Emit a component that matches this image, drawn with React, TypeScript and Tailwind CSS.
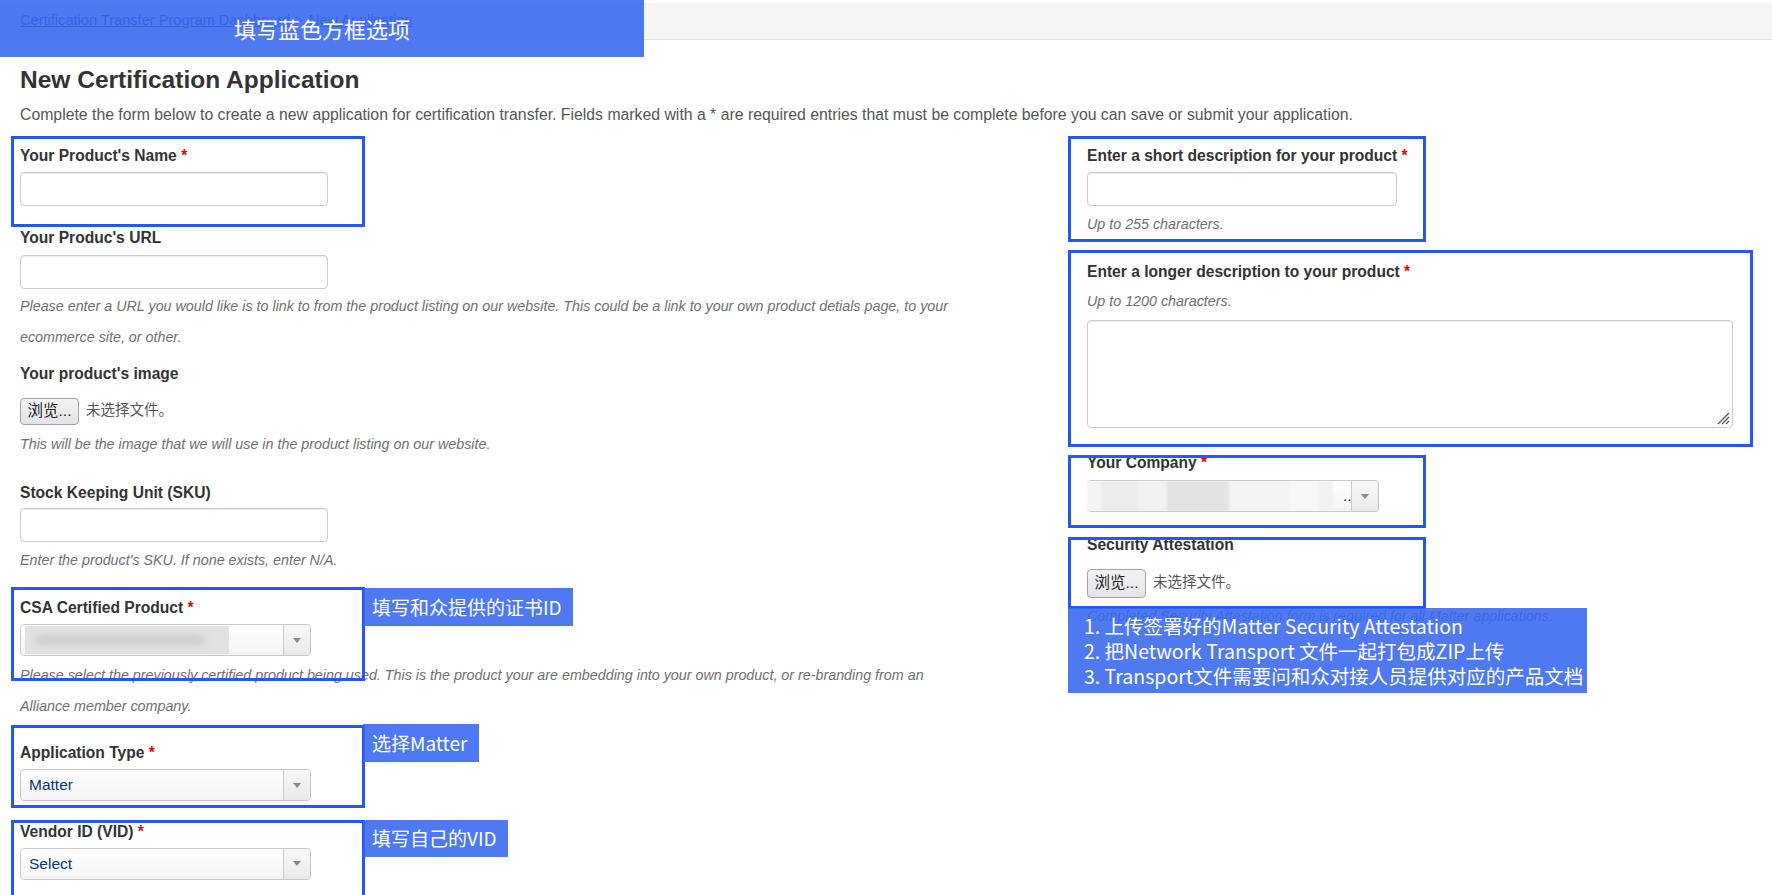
import React from "react";

const Req = () => <span className="text-[#e8000b]"> *</span>;

function Label({ children, required, className = "" }: { children: React.ReactNode; required?: boolean; className?: string }) {
  return (
    <div className={`h-[20px] text-[15.6px] font-bold leading-[20px] text-[#333] ${className}`}>
      {children}
      {required && <Req />}
    </div>
  );
}

function Help({ children, className = "" }: { children: React.ReactNode; className?: string }) {
  return <p className={`text-[14.3px] italic leading-[31px] text-[#6f6f6f] ${className}`}>{children}</p>;
}

function TextInput({ className = "" }: { className?: string }) {
  return (
    <input
      type="text"
      className={`h-[34px] rounded-[4px] border border-[#cccccc] bg-white px-3 shadow-[inset_0_1px_1px_rgba(0,0,0,0.075)] outline-none ${className}`}
    />
  );
}

function FileField({ className = "" }: { className?: string }) {
  return (
    <div className={`flex items-center ${className}`}>
      <button className="h-full w-[59px] rounded-[4px] border border-[#a3a3a3] bg-gradient-to-b from-[#f3f3f5] to-[#e4e4e8] text-[15.5px] text-[#222]">
        浏览...
      </button>
      <span className="ml-[7px] text-[14.5px] text-[#555]">未选择文件。</span>
    </div>
  );
}

function SelectBox({ className = "", children }: { className?: string; children?: React.ReactNode }) {
  return (
    <div className={`flex h-[32px] overflow-hidden rounded-[4px] border border-[#c8c8c8] bg-gradient-to-b from-white to-[#f3f3f3] ${className}`}>
      <div className="flex min-w-0 flex-1 items-center overflow-hidden text-[15.5px] text-[#0b376f]">{children}</div>
      <div className="flex w-[27px] items-center justify-center border-l border-[#cccccc] bg-gradient-to-b from-[#f8f8f8] to-[#e9e9e9]">
        <span className="h-0 w-0 border-x-[4px] border-t-[5px] border-x-transparent border-t-[#8a8a8a]" />
      </div>
    </div>
  );
}

function Frame({ className }: { className: string }) {
  return <div className={`pointer-events-none absolute border-[3px] border-[#2557f3] ${className}`} />;
}

function Note({ className, children }: { className: string; children: React.ReactNode }) {
  return (
    <div className={`absolute bg-[#3566ef]/[0.88] font-['Noto_Sans_CJK_SC',sans-serif] text-white ${className}`}>
      {children}
    </div>
  );
}

export default function App() {
  return (
    <div className="relative h-[895px] w-[1772px] overflow-hidden bg-white pt-[3px] font-['Liberation_Sans','Noto_Sans_CJK_SC',Arial,sans-serif]">
      {/* breadcrumb */}
      <div className="flex h-[37px] items-center border-b border-[#e2e2e2] bg-[#f5f5f5] px-[20px] text-[14.6px]">
        <a className="text-[#1d4ea8] underline">Certification Transfer Program Dashboard</a>
        <span className="mx-[5px] text-[#555]">&gt;</span>
        <a className="text-[#1d4ea8] underline">New Application</a>
      </div>

      <div className="px-[20px]">
        <h1 className="mt-[26px] text-[24.5px] font-bold leading-[28px] text-[#333]">New Certification Application</h1>
        <p className="mt-[11px] text-[15.8px] leading-[20px] text-[#555]">
          Complete the form below to create a new application for certification transfer. Fields marked with a * are
          required entries that must be complete before you can save or submit your application.
        </p>

        <div className="mt-[21px] flex">
          {/* left column */}
          <div className="w-[945px] shrink-0">
            <Label required>Your Product's Name</Label>
            <TextInput className="mt-[6px] w-[308px]" />

            <Label className="mt-[22px]">Your Produc's URL</Label>
            <TextInput className="mt-[7px] w-[308px]" />
            <Help className="mt-[1.5px]">
              Please enter a URL you would like is to link to from the product listing on our website. This could be a
              link to your own product detials page, to your ecommerce site, or other.
            </Help>

            <Label className="mt-[11px]">Your product's image</Label>
            <FileField className="mt-[14px] h-[27px]" />
            <Help className="mt-[4px]">This will be the image that we will use in the product listing on our website.</Help>

            <Label className="mt-[23.5px]">Stock Keeping Unit (SKU)</Label>
            <TextInput className="mt-[5px] w-[308px]" />
            <Help className="mt-[2.5px]">Enter the product's SKU. If none exists, enter N/A.</Help>

            <Label required className="mt-[22.5px]">CSA Certified Product</Label>
            <SelectBox className="mt-[6px] w-[291px]">
              <div className="ml-[4px] flex h-[28px] w-[204px] items-center bg-[#e2e2e2] px-[10px]">
                <div className="h-[10px] w-[170px] rounded-full bg-[#cdcdcd] blur-[3px]" />
              </div>
            </SelectBox>
            <Help className="mt-[3.5px] leading-[29px]">
              Please select the previously certified product being used. This is the product your are embedding into your
              own product, or re-branding from an Alliance member company.
            </Help>

            <Label required className="mt-[21.5px]">Application Type</Label>
            <SelectBox className="mt-[6px] w-[291px]">
              <span className="pl-[8px]">Matter</span>
            </SelectBox>

            <Label required className="mt-[20.5px]">Vendor ID (VID)</Label>
            <SelectBox className="mt-[6px] w-[291px]">
              <span className="pl-[8px]">Select</span>
            </SelectBox>
          </div>

          {/* right column */}
          <div className="ml-[122px] w-[646px] shrink-0">
            <Label required>Enter a short description for your product</Label>
            <TextInput className="mt-[6px] w-[310px]" />
            <Help className="mt-[2.5px]">Up to 255 characters.</Help>

            <Label required className="mt-[22.5px]">Enter a longer description to your product</Label>
            <Help className="mt-[3.5px]">Up to 1200 characters.</Help>
            <div className="relative mt-[3.5px] h-[108px] w-[646px]">
              <textarea className="h-full w-full resize-none rounded-[4px] border border-[#cccccc] shadow-[inset_0_1px_1px_rgba(0,0,0,0.075)] outline-none" />
              <svg className="absolute bottom-[3px] right-[3px]" width="14" height="14" viewBox="0 0 14 14">
                <path d="M13 2 L2 13 M13 6 L6 13 M13 10 L10 13" stroke="#555" strokeWidth="1.3" />
              </svg>
            </div>

            <Label required className="mt-[25px]">Your Company</Label>
            <SelectBox className="mt-[7px] w-[292px] border-l-0">
              <div className="flex h-full items-stretch blur-[1px]">
                <div className="w-[14px] bg-[#f4f4f4]" />
                <div className="w-[36px] bg-[#ebebeb]" />
                <div className="w-[30px] bg-[#f1f1f1]" />
                <div className="w-[62px] bg-[#e4e4e4]" />
                <div className="w-[60px] bg-[#f3f3f3]" />
                <div className="w-[30px] bg-[#f7f7f7]" />
                <div className="w-[14px] bg-[#f1f1f1]" />
              </div>
              <span className="ml-[10px] text-[#333]">..</span>
            </SelectBox>

            <Label className="mt-[23px]">Security Attestation</Label>
            <FileField className="mt-[13.5px] h-[29px]" />
            <Help className="mt-[3px]">Completed Security Attestation form is required for all Matter applications.</Help>
          </div>
        </div>
      </div>

      {/* annotation frames */}
      <Frame className="left-[11px] top-[136px] h-[91px] w-[354px]" />
      <Frame className="left-[11px] top-[587px] h-[94px] w-[354px]" />
      <Frame className="left-[11px] top-[725px] h-[83px] w-[354px]" />
      <Frame className="left-[11px] top-[820px] h-[80px] w-[354px]" />
      <Frame className="left-[1068px] top-[136px] h-[106px] w-[358px]" />
      <Frame className="left-[1068px] top-[250px] h-[197px] w-[685px]" />
      <Frame className="left-[1068px] top-[455px] h-[73px] w-[358px]" />
      <Frame className="left-[1068px] top-[537px] h-[72px] w-[358px]" />

      {/* annotation notes */}
      <Note className="left-0 top-0 flex h-[57px] w-[644px] items-center justify-center text-[22px]">
        填写蓝色方框选项
      </Note>
      <Note className="left-[363px] top-[588px] flex h-[38px] w-[210px] items-center pl-[9px] text-[19px]">
        填写和众提供的证书ID
      </Note>
      <Note className="left-[363px] top-[724px] flex h-[38px] w-[116px] items-center pl-[9px] text-[19px]">
        选择Matter
      </Note>
      <Note className="left-[363px] top-[820px] flex h-[37px] w-[145px] items-center pl-[9px] text-[19px]">
        填写自己的VID
      </Note>
      <Note className="left-[1068px] top-[608px] h-[85px] w-[519px] pl-[16px] pt-[4.5px] text-[19.5px] leading-[25px]">
        <div>1. 上传签署好的Matter Security Attestation</div>
        <div>2. 把Network Transport 文件一起打包成ZIP上传</div>
        <div>3. Transport文件需要问和众对接人员提供对应的产品文档</div>
      </Note>
    </div>
  );
}
